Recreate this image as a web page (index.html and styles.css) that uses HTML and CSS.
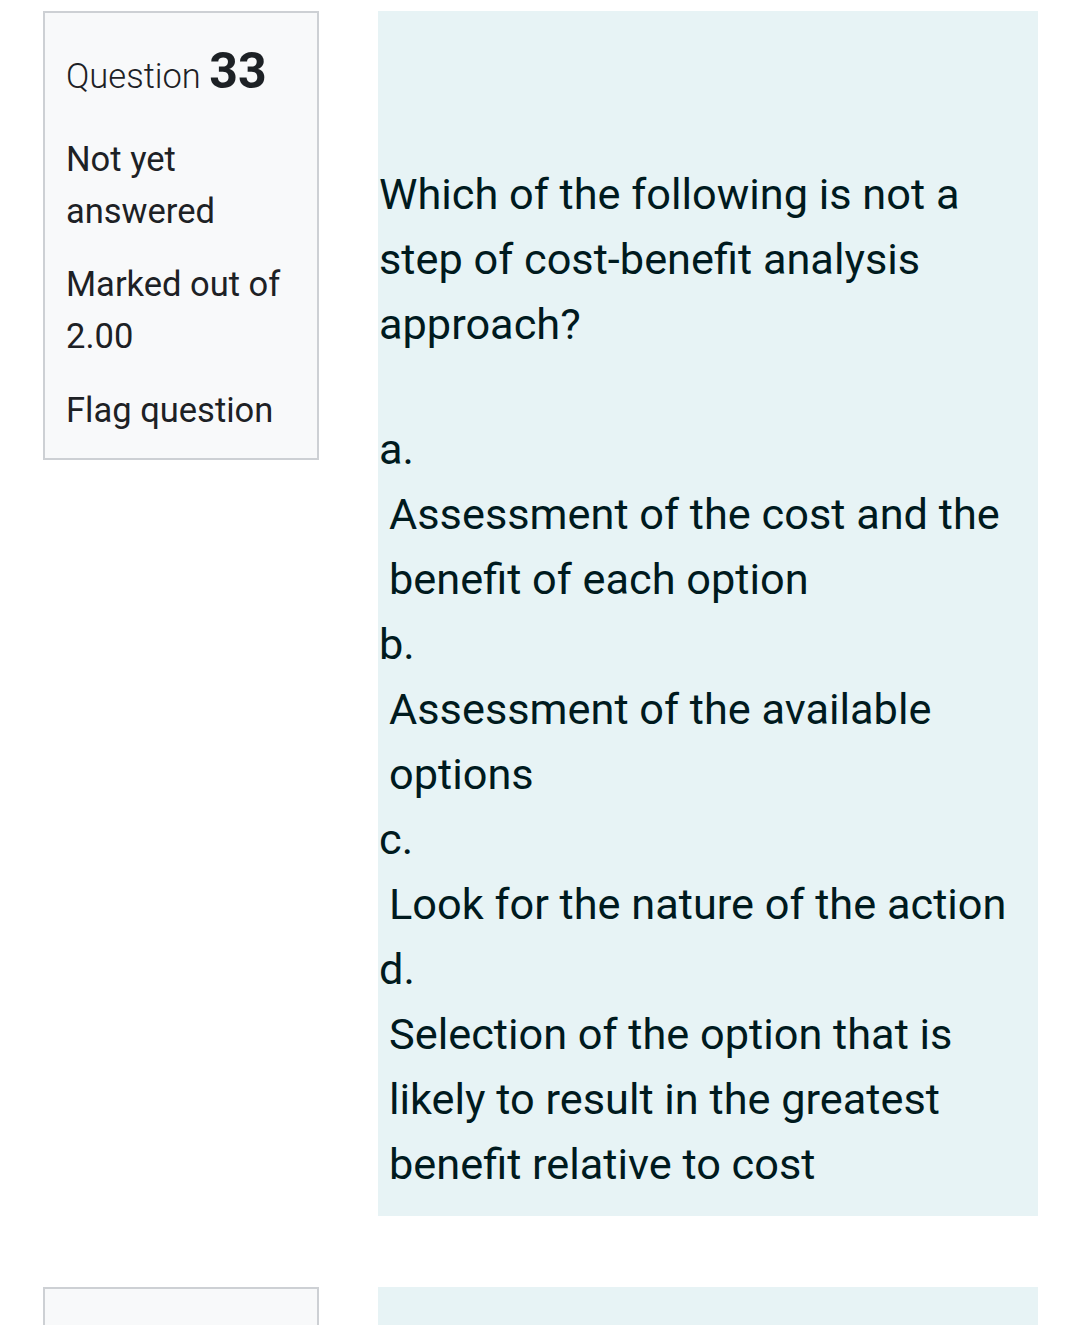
FILE: index.html
```html
<!DOCTYPE html>
<html>
<head>
<meta charset="utf-8">
<link rel="stylesheet" href="styles.css">
</head>
<body>
<div class="page">
  <div class="que">
    <div class="info">
      <h3 class="qno">Question <span class="num">33</span></h3>
      <div class="state">Not yet answered</div>
      <div class="grade">Marked out of 2.00</div>
      <div class="flag">Flag question</div>
    </div>
    <div class="content">
      <div class="qtext">Which of the following is not a step of cost-benefit analysis approach?</div>
      <div class="answer">
        <div class="opt"><span class="lbl">a.</span><div class="otext">Assessment of the cost and the benefit of each option</div></div>
        <div class="opt"><span class="lbl">b.</span><div class="otext">Assessment of the available options</div></div>
        <div class="opt"><span class="lbl">c.</span><div class="otext">Look for the nature of the action</div></div>
        <div class="opt"><span class="lbl">d.</span><div class="otext">Selection of the option that is likely to result in the greatest benefit relative to cost</div></div>
      </div>
    </div>
  </div>
  <div class="que">
    <div class="info info-next"></div>
    <div class="content content-next"></div>
  </div>
</div>
</body>
</html>
```

FILE: styles.css
```css
html, body {
  margin: 0;
  padding: 0;
  background: #ffffff;
}
body {
  font-family: Roboto, "Liberation Sans", sans-serif;
  color: #1d2125;
}
.page {
  padding: 11px 0 0 43px;
  height: 1314px;
  overflow: hidden;
}
.que {
  display: flex;
  align-items: flex-start;
  gap: 59px;
  margin-bottom: 71px;
}
.info {
  width: 276px;
  flex: none;
  background: #f8f9fa;
  border: 2px solid #cdd0d4;
  padding: 30px 19px 22px 21px;
  box-sizing: border-box;
  font-size: 34.5px;
  line-height: 52px;
}
.qno {
  margin: 0 0 29px 0;
  font-weight: 300;
  font-size: 34.5px;
  line-height: 56px;
  color: #1d2125;
}
.num {
  font-weight: 700;
  font-size: 50px;
}
.state {
  margin-bottom: 21px;
}
.grade {
  margin-bottom: 22px;
}
.content {
  width: 660px;
  flex: none;
  background: #e7f3f5;
  color: #001a1e;
  padding: 151px 10px 19px 1px;
  box-sizing: border-box;
  font-size: 43.3px;
  line-height: 65px;
}
.qtext {
  margin-bottom: 60px;
}
.lbl {
  display: block;
}
.otext {
  margin-left: 10px;
}
.info-next {
  height: 60px;
}
.content-next {
  height: 60px;
}
```
